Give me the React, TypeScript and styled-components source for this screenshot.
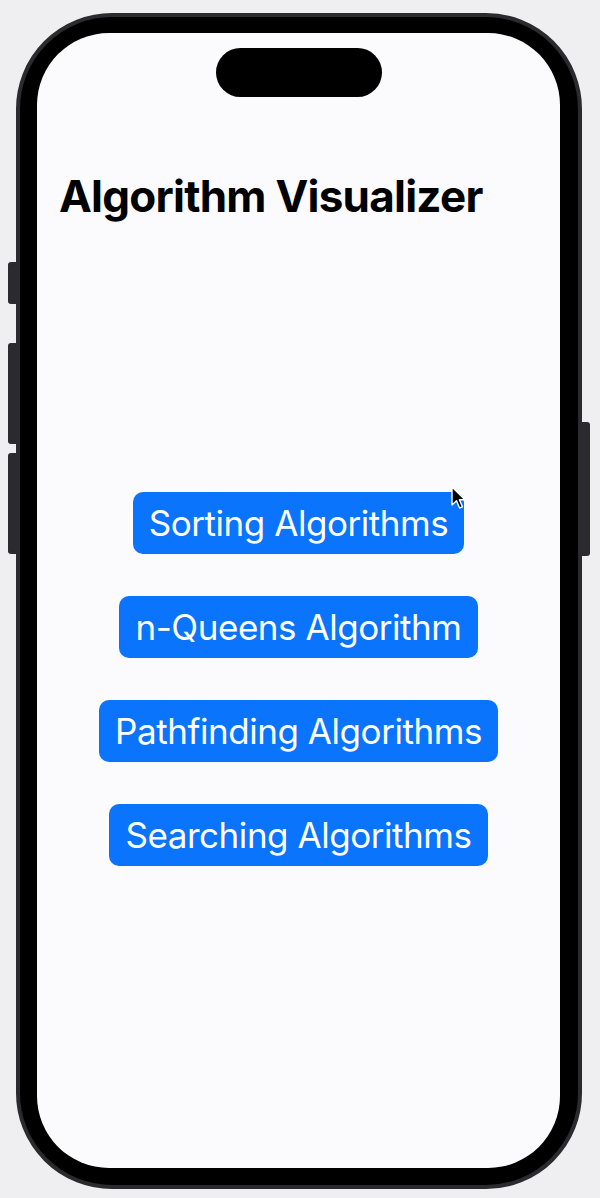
import React from "react";
import styled, { createGlobalStyle } from "styled-components";

const Global = createGlobalStyle`
  html, body { margin: 0; padding: 0; }
  body {
    background: #efeef0;
    font-family: Inter, "Noto Sans", sans-serif;
    -webkit-font-smoothing: antialiased;
  }
`;

const Stage = styled.div`
  width: 600px;
  height: 1198px;
  padding: 13px 0 0 16px;
  box-sizing: border-box;
  overflow: hidden;
`;

const Phone = styled.div`
  position: relative;
  width: 566px;
  height: 1176px;
  box-sizing: border-box;
  border: 4px solid #2b2a2e;
  border-radius: 96px;
  background: #000;
  padding: 16px 18px 17px 17px;
`;

const SideButton = styled.div<{ $side: "left" | "right"; $top: number; $h: number }>`
  position: absolute;
  top: ${(p) => p.$top}px;
  ${(p) => (p.$side === "left" ? "left: -12px;" : "right: -12px;")}
  width: 8px;
  height: ${(p) => p.$h}px;
  background: #2b2a2e;
  border-radius: ${(p) => (p.$side === "left" ? "3px 0 0 3px" : "0 3px 3px 0")};
`;

const Screen = styled.div`
  position: relative;
  height: 100%;
  background: #fbfafd;
  border-radius: 72px;
  display: flex;
  flex-direction: column;
  align-items: stretch;
  overflow: hidden;
`;

const Island = styled.div`
  align-self: center;
  margin-top: 15px;
  margin-left: 1px;
  width: 166px;
  height: 49px;
  border-radius: 25px;
  background: #000;
  flex-shrink: 0;
`;

const Title = styled.h1`
  margin: 77px 0 0 22px;
  font-family: Inter, "Noto Sans", sans-serif;
  font-weight: 700;
  font-size: 44px;
  line-height: 1;
  color: #000;
  letter-spacing: -0.75px;
`;

const ButtonList = styled.div`
  margin-top: 274px;
  display: flex;
  flex-direction: column;
  align-items: center;
  gap: 42px;
`;

const ActionButton = styled.button`
  height: 62px;
  padding: 0 16px;
  border: none;
  border-radius: 10px;
  background: #0a74fc;
  color: #fff;
  font-family: Inter, "Noto Sans", sans-serif;
  font-weight: 400;
  font-size: 35px;
  letter-spacing: -0.45px;
  line-height: 1;
  display: flex;
  align-items: center;
  justify-content: center;
  cursor: pointer;
`;

const Cursor = styled.svg`
  position: absolute;
  left: 414px;
  top: 453px;
  width: 16px;
  height: 26px;
`;

const items = [
  "Sorting Algorithms",
  "n-Queens Algorithm",
  "Pathfinding Algorithms",
  "Searching Algorithms",
];

export default function App() {
  return (
    <>
      <Global />
      <Stage>
        <Phone>
          <SideButton $side="left" $top={245} $h={42} />
          <SideButton $side="left" $top={326} $h={101} />
          <SideButton $side="left" $top={436} $h={101} />
          <SideButton $side="right" $top={405} $h={134} />
          <Screen>
            <Island />
            <Title>Algorithm Visualizer</Title>
            <ButtonList>
              {items.map((t) => (
                <ActionButton key={t}>{t}</ActionButton>
              ))}
            </ButtonList>
            <Cursor viewBox="0 0 16 26">
              <path
                d="M1 1 L1 19 L5.5 14.8 L8.6 22 L11.4 20.8 L8.4 13.8 L14 13.8 Z"
                fill="#000"
                stroke="#fff"
                strokeWidth="1.4"
                strokeLinejoin="round"
              />
            </Cursor>
          </Screen>
        </Phone>
      </Stage>
    </>
  );
}
